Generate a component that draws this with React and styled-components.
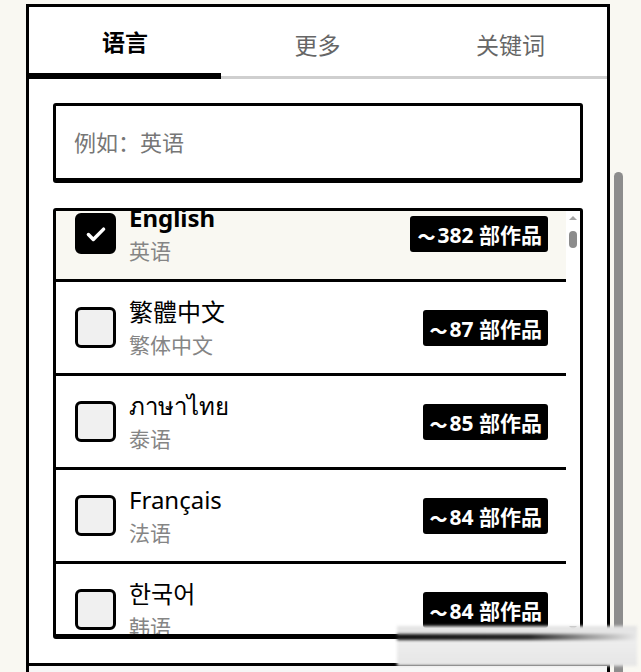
import React, { useEffect, useRef } from 'react'
import styled, { createGlobalStyle } from 'styled-components'

const GlobalStyle = createGlobalStyle`
  html, body {
    margin: 0;
    padding: 0;
    background: #f9f8f2;
    font-family: "Noto Sans", "Noto Sans CJK SC", sans-serif;
    overflow: hidden;
  }
  * { box-sizing: border-box; }
`

const languages = [
  { name: 'English', sub: '英语', count: 382, checked: true },
  { name: '繁體中文', sub: '繁体中文', count: 87 },
  { name: 'ภาษาไทย', sub: '泰语', count: 85 },
  { name: 'Français', sub: '法语', count: 84 },
  { name: '한국어', sub: '韩语', count: 84 },
  { name: 'Deutsch', sub: '德语', count: 79 },
  { name: 'Español', sub: '西班牙语', count: 77 },
  { name: '日本語', sub: '日语', count: 75 },
]

function Check() {
  return (
    <svg width="26" height="26" viewBox="0 0 24 24" fill="none">
      <path d="M5 12.5l4.5 4.5L19 7.5" stroke="#fff" strokeWidth="3.2" strokeLinecap="round" strokeLinejoin="round" />
    </svg>
  )
}

function App() {
  const viewRef = useRef(null)

  useEffect(() => {
    if (viewRef.current) viewRef.current.scrollTop = 23
  }, [])

  return (
    <Page>
      <GlobalStyle />
      <Panel>
        <Tabs>
          <Tab active>语言</Tab>
          <Tab>更多</Tab>
          <Tab>关键词</Tab>
        </Tabs>
        <Body>
          <Search placeholder="例如：英语" />
          <List>
            <Viewport ref={viewRef}>
              {languages.map((l) => (
                <Row key={l.name} selected={l.checked}>
                  <Box checked={l.checked}>{l.checked && <Check />}</Box>
                  <Names>
                    <Name bold={l.checked}>{l.name}</Name>
                    <Sub>{l.sub}</Sub>
                  </Names>
                  <Badge>
                    <Wave>〜</Wave>
                    {l.count} 部作品
                  </Badge>
                </Row>
              ))}
            </Viewport>
            <MiniBar>
              <Arrow />
              <MiniThumb />
              <Arrow down />
            </MiniBar>
          </List>
        </Body>
        <Footer />
      </Panel>
      <Track>
        <Thumb />
      </Track>
      <Smudge />
    </Page>
  )
}

export default App

const Page = styled.div`
  display: flex;
  align-items: flex-start;
  padding: 4px 0 0 26px;
  height: 672px;
  position: relative;
`

const Panel = styled.div`
  width: 584px;
  border: 3px solid #000;
  background: #fff;
  display: flex;
  flex-direction: column;
`

const Tabs = styled.div`
  display: grid;
  grid-template-columns: 192px 1fr 1fr;
  height: 72px;
`

const Tab = styled.div`
  display: flex;
  align-items: center;
  justify-content: center;
  padding-top: ${(p) => (p.active ? '2px' : '4px')};
  font-size: 23px;
  font-weight: ${(p) => (p.active ? 700 : 400)};
  color: ${(p) => (p.active ? '#000' : '#666')};
  border-bottom: ${(p) => (p.active ? '6px solid #000' : '3px solid #cfcfcf')};
`

const Body = styled.div`
  padding: 24px;
  display: flex;
  flex-direction: column;
  gap: 25px;
`

const Search = styled.input`
  height: 80px;
  border: 3px solid #000;
  border-bottom-width: 5px;
  border-radius: 3px;
  padding: 0 18px;
  font-family: inherit;
  font-size: 22px;
  outline: none;
  &::placeholder { color: #767676; }
`

const List = styled.div`
  height: 431px;
  border: 3px solid #000;
  border-bottom-width: 5px;
  border-radius: 3px;
  display: flex;
  overflow: hidden;
`

const Viewport = styled.div`
  flex: 1;
  overflow: hidden;
`

const MiniBar = styled.div`
  width: 14px;
  display: flex;
  flex-direction: column;
  align-items: center;
  padding: 5px 0 4px;
  background: #fff;
`

const Arrow = styled.div`
  width: 0;
  height: 0;
  border-left: 4px solid transparent;
  border-right: 4px solid transparent;
  ${(p) => (p.down ? 'border-top: 4px solid #a3a3a3;' : 'border-bottom: 4px solid #a3a3a3;')}
  ${(p) => p.down && 'margin-top: auto;'}
`

const MiniThumb = styled.div`
  width: 8px;
  height: 17px;
  margin-top: 11px;
  border-radius: 4px;
  background: #8c8c8c;
`

const Row = styled.div`
  height: 94px;
  display: flex;
  align-items: center;
  padding: 0 18px 0 19px;
  border-bottom: 3px solid #000;
  background: ${(p) => (p.selected ? '#f9f8f2' : '#fff')};
`

const Box = styled.div`
  width: 41px;
  height: 41px;
  flex-shrink: 0;
  border: 3px solid #000;
  border-radius: 6px;
  background: ${(p) => (p.checked ? '#000' : '#f0f0f0')};
  display: flex;
  align-items: center;
  justify-content: center;
`

const Names = styled.div`
  flex: 1;
  margin-left: 13px;
  display: flex;
  flex-direction: column;
  gap: 4px;
`

const Name = styled.div`
  font-size: 24px;
  line-height: 30px;
  color: #000;
  font-weight: ${(p) => (p.bold ? 700 : 400)};
`

const Sub = styled.div`
  font-size: 21px;
  line-height: 28px;
  color: #858585;
`

const Badge = styled.div`
  height: 36px;
  display: flex;
  align-items: center;
  padding: 0 6px 0 5px;
  background: #000;
  color: #fff;
  border-radius: 3px;
  font-size: 21px;
  font-weight: 700;
  white-space: nowrap;
`

const Wave = styled.span`
  font-family: "Noto Sans CJK SC", sans-serif;
  font-weight: 900;
  font-size: 18px;
  width: 22px;
  display: inline-flex;
  justify-content: center;
  margin-top: 4px;
`

const Footer = styled.div`
  height: 60px;
  border-top: 3px solid #000;
  background: #f6f6f6;
`

const Track = styled.div`
  width: 31px;
  align-self: stretch;
  padding: 168px 0 0 4px;
`

const Thumb = styled.div`
  width: 9px;
  height: 540px;
  border-radius: 5px;
  background: #8d8d8d;
`

const Smudge = styled.div`
  position: absolute;
  left: 397px;
  top: 626px;
  width: 240px;
  height: 40px;
  filter: blur(1.5px);
  background:
    linear-gradient(to right, #111 0%, #222 55%, rgba(40,40,40,0.4) 80%, rgba(200,200,200,0) 100%) 0 8px / 100% 6px no-repeat,
    linear-gradient(to bottom, #e2e2e2 0%, #ededed 40%, #e6e6e6 100%);
`
